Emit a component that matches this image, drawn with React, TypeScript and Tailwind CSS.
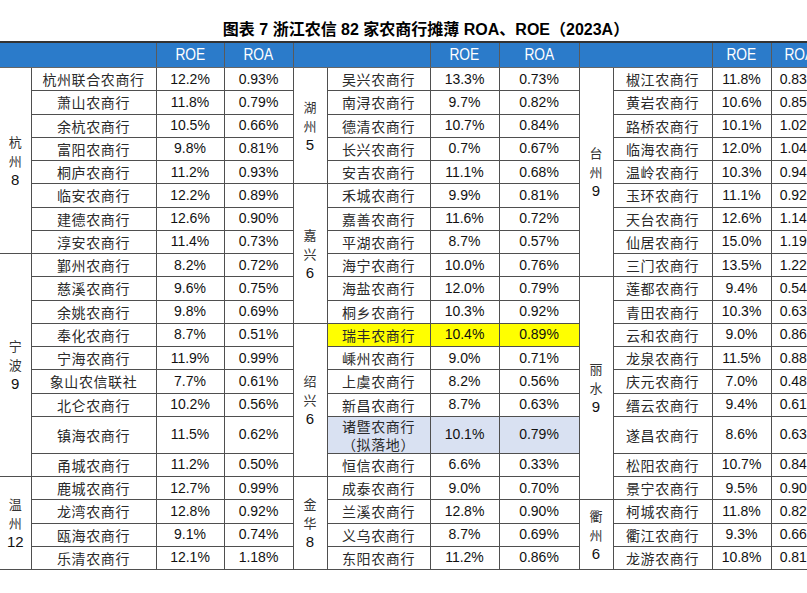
import React from 'react';

type Bank = { name: string; roe: string; roa: string; hl?: 'yellow' | 'blue'; sub?: string };
type Region = { label: string[]; banks: Bank[] };

const b = (name: string, roe: string, roa: string, extra: Partial<Bank> = {}): Bank => ({ name, roe, roa, ...extra });

const groups: Region[][] = [
  [
    {
      label: ['杭', '州', '8'],
      banks: [
        b('杭州联合农商行', '12.2%', '0.93%'),
        b('萧山农商行', '11.8%', '0.79%'),
        b('余杭农商行', '10.5%', '0.66%'),
        b('富阳农商行', '9.8%', '0.81%'),
        b('桐庐农商行', '11.2%', '0.93%'),
        b('临安农商行', '12.2%', '0.89%'),
        b('建德农商行', '12.6%', '0.90%'),
        b('淳安农商行', '11.4%', '0.73%'),
      ],
    },
    {
      label: ['宁', '波', '9'],
      banks: [
        b('鄞州农商行', '8.2%', '0.72%'),
        b('慈溪农商行', '9.6%', '0.75%'),
        b('余姚农商行', '9.8%', '0.69%'),
        b('奉化农商行', '8.7%', '0.51%'),
        b('宁海农商行', '11.9%', '0.99%'),
        b('象山农信联社', '7.7%', '0.61%'),
        b('北仑农商行', '10.2%', '0.56%'),
        b('镇海农商行', '11.5%', '0.62%'),
        b('甬城农商行', '11.2%', '0.50%'),
      ],
    },
    {
      label: ['温', '州', '12'],
      banks: [
        b('鹿城农商行', '12.7%', '0.99%'),
        b('龙湾农商行', '12.8%', '0.92%'),
        b('瓯海农商行', '9.1%', '0.74%'),
        b('乐清农商行', '12.1%', '1.18%'),
      ],
    },
  ],
  [
    {
      label: ['湖', '州', '5'],
      banks: [
        b('吴兴农商行', '13.3%', '0.73%'),
        b('南浔农商行', '9.7%', '0.82%'),
        b('德清农商行', '10.7%', '0.84%'),
        b('长兴农商行', '0.7%', '0.67%'),
        b('安吉农商行', '11.1%', '0.68%'),
      ],
    },
    {
      label: ['嘉', '兴', '6'],
      banks: [
        b('禾城农商行', '9.9%', '0.81%'),
        b('嘉善农商行', '11.6%', '0.72%'),
        b('平湖农商行', '8.7%', '0.57%'),
        b('海宁农商行', '10.0%', '0.76%'),
        b('海盐农商行', '12.0%', '0.79%'),
        b('桐乡农商行', '10.3%', '0.92%'),
      ],
    },
    {
      label: ['绍', '兴', '6'],
      banks: [
        b('瑞丰农商行', '10.4%', '0.89%', { hl: 'yellow' }),
        b('嵊州农商行', '9.0%', '0.71%'),
        b('上虞农商行', '8.2%', '0.56%'),
        b('新昌农商行', '8.7%', '0.63%'),
        b('诸暨农商行', '10.1%', '0.79%', { hl: 'blue', sub: '（拟落地）' }),
        b('恒信农商行', '6.6%', '0.33%'),
      ],
    },
    {
      label: ['金', '华', '8'],
      banks: [
        b('成泰农商行', '9.0%', '0.70%'),
        b('兰溪农商行', '12.8%', '0.90%'),
        b('义乌农商行', '8.7%', '0.69%'),
        b('东阳农商行', '11.2%', '0.86%'),
      ],
    },
  ],
  [
    {
      label: ['台', '州', '9'],
      banks: [
        b('椒江农商行', '11.8%', '0.83%'),
        b('黄岩农商行', '10.6%', '0.85%'),
        b('路桥农商行', '10.1%', '1.02%'),
        b('临海农商行', '12.0%', '1.04%'),
        b('温岭农商行', '10.3%', '0.94%'),
        b('玉环农商行', '11.1%', '0.92%'),
        b('天台农商行', '12.6%', '1.14%'),
        b('仙居农商行', '15.0%', '1.19%'),
        b('三门农商行', '13.5%', '1.22%'),
      ],
    },
    {
      label: ['丽', '水', '9'],
      banks: [
        b('莲都农商行', '9.4%', '0.54%'),
        b('青田农商行', '10.3%', '0.63%'),
        b('云和农商行', '9.0%', '0.86%'),
        b('龙泉农商行', '11.5%', '0.88%'),
        b('庆元农商行', '7.0%', '0.48%'),
        b('缙云农商行', '9.4%', '0.61%'),
        b('遂昌农商行', '8.6%', '0.63%'),
        b('松阳农商行', '10.7%', '0.84%'),
        b('景宁农商行', '9.5%', '0.90%'),
      ],
    },
    {
      label: ['衢', '州', '6'],
      banks: [
        b('柯城农商行', '11.8%', '0.82%'),
        b('衢江农商行', '9.3%', '0.66%'),
        b('龙游农商行', '10.8%', '0.81%'),
      ],
    },
  ],
];

type Slot = { bank: Bank; region?: Region; span: number };

// flatten each column group into 21 row slots
const columns: Slot[][] = groups.map(regions => {
  const out: Slot[] = [];
  regions.forEach(r => {
    r.banks.forEach((bank, i) => out.push({ bank, region: i === 0 ? r : undefined, span: r.banks.length }));
  });
  return out;
});

const TALL = 15;
const line = 'border border-[#4f4f4f]';
const cjk = "font-['Noto_Sans_CJK_SC',sans-serif]";
const num = "font-['Liberation_Sans',Arial,sans-serif] text-[14px] text-[#111]";
const headCell = 'border-t-2 border-t-[#333] border-b border-b-[#666] border-x border-x-[#5a5a5a]';

function cellBg(hl?: 'yellow' | 'blue') {
  if (hl === 'yellow') return 'bg-[#ffff00]';
  if (hl === 'blue') return 'bg-[#d9e1f2]';
  return 'bg-white';
}

function RegionCell({ region, span, first }: { region: Region; span: number; first: boolean }) {
  return (
    <td rowSpan={span} className={`${line} ${first ? 'border-l-0' : ''} align-middle`}>
      <div className="flex flex-col items-center leading-[19px] text-[#333]">
        {region.label.map((c, i) =>
          /\d/.test(c) ? (
            <span key={i} className="font-['Liberation_Sans',Arial,sans-serif] text-[15px] leading-[20px] text-[#111]">{c}</span>
          ) : (
            <span key={i} className={`${cjk} text-[13px]`}>{c}</span>
          )
        )}
      </div>
    </td>
  );
}

function HeadLabel({ text }: { text: string }) {
  return (
    <th className={`${headCell} font-['Liberation_Sans',Arial,sans-serif] text-[16px] font-normal text-white`}>
      <span className="inline-block scale-x-[0.86]">{text}</span>
    </th>
  );
}

export default function App() {
  return (
    <div className="w-[807px] h-[593px] overflow-hidden bg-white">
      <div className="w-[852px]">
        <div className="h-[41px] pt-[17px] text-center">
          <span className="font-['Liberation_Sans','Noto_Sans_CJK_SC',sans-serif] text-[16px] leading-[20px] font-bold text-black">
            图表 7 浙江农信 82 家农商行摊薄 ROA、ROE（2023A）
          </span>
        </div>
        <table className="table-fixed border-collapse w-[828px]">
          <colgroup>
            <col className="w-[31px]" />
            <col className="w-[125px]" />
            <col className="w-[68px]" />
            <col className="w-[69px]" />
            <col className="w-[34px]" />
            <col className="w-[103px]" />
            <col className="w-[69px]" />
            <col className="w-[80px]" />
            <col className="w-[34px]" />
            <col className="w-[99px]" />
            <col className="w-[59px]" />
            <col className="w-[57px]" />
          </colgroup>
          <thead>
            <tr className="h-[24px] bg-[#2b7bca]">
              {[0, 1, 2].map(g => (
                <React.Fragment key={g}>
                  <th colSpan={2} className={`${headCell} ${g === 0 ? 'border-l-0' : ''}`} />
                  <HeadLabel text="ROE" />
                  <HeadLabel text="ROA" />
                </React.Fragment>
              ))}
            </tr>
          </thead>
          <tbody>
            {columns[0].map((_, r) => (
              <tr key={r} className={r === TALL ? 'h-[36.6px]' : 'h-[23.25px]'}>
                {columns.map((col, g) => {
                  const s = col[r];
                  return (
                    <React.Fragment key={g}>
                      {s.region && <RegionCell region={s.region} span={s.span} first={g === 0} />}
                      <td className={`${line} ${cellBg(s.bank.hl)} text-center align-middle`}>
                        <div className={`${cjk} text-[14px] leading-[18px] tracking-[0.6px] text-[#2a2a2a]`}>
                          {s.bank.name}
                          {s.bank.sub && <br />}
                          {s.bank.sub}
                        </div>
                      </td>
                      <td className={`${line} ${cellBg(s.bank.hl)} ${num} text-center align-middle`}>{s.bank.roe}</td>
                      <td className={`${line} ${cellBg(s.bank.hl)} ${num} text-center align-middle`}>{s.bank.roa}</td>
                    </React.Fragment>
                  );
                })}
              </tr>
            ))}
          </tbody>
        </table>
      </div>
    </div>
  );
}
